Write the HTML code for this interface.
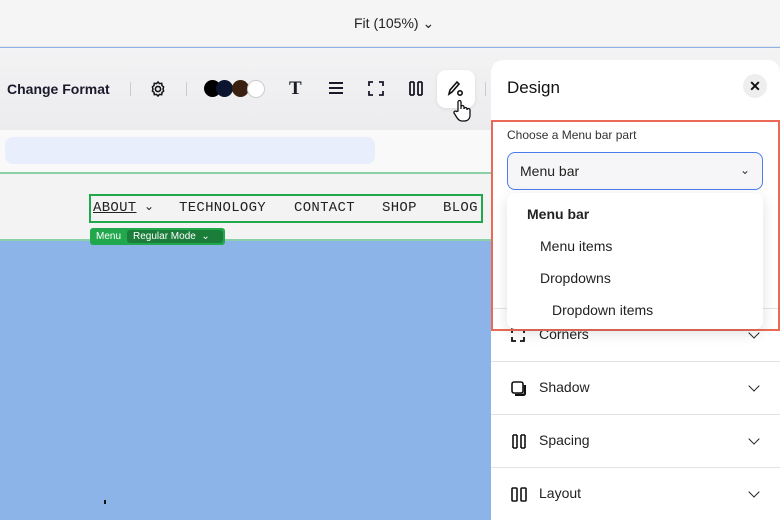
<!DOCTYPE html>
<html><head><meta charset="utf-8"><style>
*{margin:0;padding:0;box-sizing:border-box}
body{width:780px;height:504px;overflow:hidden;position:relative;font-family:"Liberation Sans",sans-serif;background:#8db4e8;color:#111}
.a{position:absolute}
.mono{font-family:"Liberation Mono",monospace;font-size:14px;color:#222;letter-spacing:0.3px}
.sep{position:absolute;width:1px;height:14px;background:#ccc;top:82px}
.row{position:absolute;left:491px;width:289px;height:53px;border-top:1px solid #e2e2e2;background:#fff}
.row span{position:absolute;left:48px;top:17px;font-size:14px;color:#222}
.row i{position:absolute;right:22px;top:20px;width:8px;height:8px;border-right:1.6px solid #222;border-bottom:1.6px solid #222;transform:rotate(45deg)}
</style></head><body>
<div class="a" style="left:0;top:0;width:780px;height:47px;background:#f5f5f5;border-bottom:1px solid #e6e6e6"></div>
<div class="a" style="left:354px;top:15px;font-size:14px;color:#222">Fit (105%) ⌄</div>
<div class="a" style="left:0;top:48px;width:780px;height:82px;background:linear-gradient(#f3f3f4,#ececef)"></div>
<div class="a" style="left:7px;top:81px;font-size:14px;font-weight:bold;color:#1a1a2a">Change Format</div>
<div class="sep" style="left:130px"></div>
<svg class="a" style="left:149px;top:80px" width="18" height="18" viewBox="0 0 18 18"><circle cx="9" cy="9" r="2.6" fill="none" stroke="#111" stroke-width="1.6"/><path d="M9 2l1.5 1.6 2.2-.3.3 2.2L14.6 7 14 9l.6 2-1.6 1.5-.3 2.2-2.2-.3L9 16l-1.5-1.6-2.2.3-.3-2.2L3.4 11 4 9l-.6-2L5 5.5l.3-2.2 2.2.3z" fill="none" stroke="#111" stroke-width="1.5"/></svg>
<div class="sep" style="left:186px"></div>
<div class="a" style="left:204px;top:80px;width:17px;height:17px;border-radius:50%;background:#000"></div>
<div class="a" style="left:216px;top:80px;width:17px;height:17px;border-radius:50%;background:#0b1530"></div>
<div class="a" style="left:232px;top:80px;width:17px;height:17px;border-radius:50%;background:#3a2010"></div>
<div class="a" style="left:247px;top:80px;width:18px;height:18px;border-radius:50%;background:#fff;border:1px solid #ccc"></div>
<div class="a" style="left:289px;top:78px;font-family:'Liberation Serif',serif;font-size:19px;font-weight:bold;color:#1a1a2a">T</div>
<svg class="a" style="left:328px;top:81px" width="16" height="14"><path d="M1 2h14M1 7h14M1 12h14" stroke="#1a1a2a" stroke-width="2"/></svg>
<svg class="a" style="left:368px;top:81px" width="16" height="15" fill="none" stroke="#1a1a2a" stroke-width="1.8"><path d="M1 5V1h4M11 1h4v4M15 10v4h-4M5 14H1v-4"/></svg>
<svg class="a" style="left:408px;top:81px" width="16" height="15" fill="none" stroke="#1a1a2a" stroke-width="1.8"><path d="M2 1v13M6 1v13M10 1v13M14 1v13M2 1h4M2 14h4M10 1h4M10 14h4"/></svg>
<div class="a" style="left:437px;top:70px;width:38px;height:38px;background:#fff;border-radius:9px;box-shadow:0 1px 4px rgba(0,0,0,.08)"></div>
<svg class="a" style="left:446px;top:79px" width="20" height="20" fill="none" stroke="#111" stroke-width="1.6"><path d="M3 15l1-4 7-8 2 2-7 8z"/><circle cx="14" cy="14" r="2.2"/></svg>
<svg class="a" style="left:452px;top:99px" width="20" height="24" viewBox="0 0 20 24"><path d="M6 12V3a1.5 1.5 0 0 1 3 0v7l0-2a1.5 1.5 0 0 1 3 0v2a1.5 1.5 0 0 1 3 0v1a1.5 1.5 0 0 1 3 0v5c0 4-2.5 6-6 6h-2c-2.5 0-4-1.5-5.5-4L2 14a1.5 1.5 0 0 1 2.5-1.5z" fill="#fff" stroke="#111" stroke-width="1.3"/></svg>
<div class="sep" style="left:485px"></div>
<div class="a" style="left:0;top:130px;width:491px;height:43px;background:#f9f9f9"></div>
<div class="a" style="left:5px;top:137px;width:370px;height:27px;background:#e8eefc;border-radius:8px"></div>
<div class="a" style="left:0;top:172px;width:491px;height:2px;background:#8ad0a6"></div>
<div class="a" style="left:0;top:174px;width:491px;height:66px;background:#f3f3f3"></div>
<div class="a" style="left:89px;top:194px;width:394px;height:29px;border:2px solid #22a84c"></div>
<div class="a mono" style="left:93px;top:200px;text-decoration:underline">ABOUT</div>
<div class="a mono" style="left:144px;top:199px;font-size:12px">⌄</div>
<div class="a mono" style="left:179px;top:200px">TECHNOLOGY</div>
<div class="a mono" style="left:294px;top:200px">CONTACT</div>
<div class="a mono" style="left:382px;top:200px">SHOP</div>
<div class="a mono" style="left:443px;top:200px">BLOG</div>
<div class="a" style="left:0;top:239px;width:491px;height:2px;background:#8ad0a6"></div>
<div class="a" style="left:90px;top:228px;width:135px;height:17px;background:#22a84c;border-radius:3px"></div>
<div class="a" style="left:96px;top:231px;font-size:10px;color:#fff">Menu</div>
<div class="a" style="left:127px;top:230px;width:96px;height:13px;background:#1b7d3a;border-radius:3px;font-size:10px;color:#fff;padding-left:6px;line-height:13px">Regular Mode &nbsp;⌄</div>
<div class="a" style="left:104px;top:500px;width:2px;height:4px;background:#111"></div>
<div class="a" style="left:491px;top:60px;width:289px;height:444px;background:#fff;border-radius:12px 12px 0 0"></div>
<div class="a" style="left:507px;top:78px;font-size:17px;color:#111">Design</div>
<div class="a" style="left:743px;top:74px;width:24px;height:24px;border-radius:50%;background:#eee;text-align:center;line-height:24px;font-size:14px;font-weight:bold">✕</div>
<div class="row" style="top:308px"><svg class="a" style="left:20px;top:19px" width="14" height="14" fill="none" stroke="#111" stroke-width="1.8"><path d="M1 5V1h4M9 1h4v4M13 9v4H9M5 13H1V9"/></svg><span>Corners</span><i></i></div>
<div class="row" style="top:361px"><svg class="a" style="left:20px;top:19px" width="15" height="15"><rect x="1" y="1" width="11" height="11" rx="2" fill="none" stroke="#111" stroke-width="1.6"/><path d="M4 14h8a2 2 0 0 0 2-2V4" stroke="#111" stroke-width="2.4" fill="none"/></svg><span>Shadow</span><i></i></div>
<div class="row" style="top:414px"><svg class="a" style="left:20px;top:19px" width="16" height="15" fill="none" stroke="#111" stroke-width="1.6"><path d="M2 1v13M6 1v13M10 1v13M14 1v13M2 1h4M2 14h4M10 1h4M10 14h4"/></svg><span>Spacing</span><i></i></div>
<div class="row" style="top:467px"><svg class="a" style="left:20px;top:19px" width="16" height="15" fill="none" stroke="#111" stroke-width="1.6"><rect x="1" y="1" width="5" height="13" rx="1"/><rect x="10" y="1" width="5" height="13" rx="1"/></svg><span>Layout</span><i></i></div>
<div class="a" style="left:491px;top:120px;width:289px;height:211px;border:2px solid #eb6a56;background:transparent"></div>
<div class="a" style="left:493px;top:122px;width:285px;height:70px;background:#fff"></div>
<div class="a" style="left:507px;top:128px;font-size:12px;color:#333">Choose a Menu bar part</div>
<div class="a" style="left:507px;top:152px;width:256px;height:38px;border:1px solid #4a7cf0;border-radius:8px;background:#f6f6f8"></div>
<div class="a" style="left:520px;top:163px;font-size:14px;color:#222">Menu bar</div>
<div class="a" style="left:740px;top:163px;font-size:12px;color:#333">⌄</div>
<div class="a" style="left:507px;top:193px;width:256px;height:136px;background:#fff;border-radius:8px;box-shadow:0 4px 14px rgba(0,0,0,.12)"></div>
<div class="a" style="left:527px;top:206px;font-size:14px;font-weight:bold;color:#222">Menu bar</div>
<div class="a" style="left:540px;top:238px;font-size:14px;color:#222">Menu items</div>
<div class="a" style="left:540px;top:270px;font-size:14px;color:#222">Dropdowns</div>
<div class="a" style="left:552px;top:302px;font-size:14px;color:#222">Dropdown items</div>
</body></html>
